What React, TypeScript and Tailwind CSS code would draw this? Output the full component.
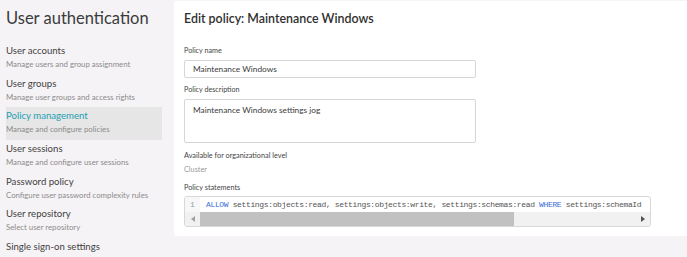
import React from "react";

const items = [
  { t: "User accounts", s: "Manage users and group assignment" },
  { t: "User groups", s: "Manage user groups and access rights" },
  { t: "Policy management", s: "Manage and configure policies", active: true },
  { t: "User sessions", s: "Manage and configure user sessions" },
  { t: "Password policy", s: "Configure user password complexity rules" },
  { t: "User repository", s: "Select user repository" },
  { t: "Single sign-on settings", s: "" },
];

export default function App() {
  return (
    <div
      className="w-[687px] h-[257px] overflow-hidden bg-[#f6f3f6] flex"
      style={{ fontFamily: "Lato, 'Open Sans', sans-serif" }}
    >
      <aside className="w-[174px] shrink-0 pl-[6px] pr-[12px]">
        <h1 className="mt-[6px] h-[24px] leading-[24px] whitespace-nowrap text-[16.5px] text-[#3b3b3b]">
          User authentication
        </h1>
        <div className="mt-[12px] flex flex-col">
          {items.map((it) => (
            <div
              key={it.t}
              className={`h-[32.67px] shrink-0 pt-[2px] ${it.active ? "bg-[#e6e6e6]" : ""}`}
            >
              <div
                className={`h-[14px] leading-[14px] whitespace-nowrap text-[9.6px] ${
                  it.active ? "text-[#1ea0b4]" : "text-[#3f3f3f]"
                }`}
              >
                {it.t}
              </div>
              <div className="h-[12px] leading-[12px] whitespace-nowrap text-[7.8px] text-[#8b8b8b]">{it.s}</div>
            </div>
          ))}
        </div>
      </aside>

      <main className="mt-[1px] h-[235px] flex-1 bg-white rounded-l-[2px] pl-[10px] pt-[8px]">
        <h2 className="h-[20px] leading-[20px] text-[12.4px] font-semibold text-[#2f2f2f]">
          Edit policy: Maintenance Windows
        </h2>
        <div className="mt-[17px] h-[10px] leading-[10px] text-[7.2px] text-[#454545]">Policy name</div>
        <div className="mt-[4px] w-[292px] h-[18px] border border-[#d6d6d6] rounded-[2px] pl-[8px] flex items-center text-[8.3px] text-[#3c3c3c]">
          Maintenance Windows
        </div>
        <div className="mt-[7px] h-[10px] leading-[10px] text-[7.2px] text-[#454545]">Policy description</div>
        <div className="mt-[4px] w-[292px] h-[44px] border border-[#d6d6d6] rounded-[2px] pl-[8px] pt-[3px] leading-[14px] text-[8.3px] text-[#3c3c3c]">
          Maintenance Windows settings jog
        </div>
        <div className="mt-[8px] h-[10px] leading-[10px] text-[7.3px] text-[#454545]">
          Available for organizational level
        </div>
        <div className="mt-[4px] h-[10px] leading-[10px] text-[7.3px] text-[#9a9a9a]">Cluster</div>
        <div className="mt-[8px] h-[10px] leading-[10px] text-[7.3px] text-[#454545]">Policy statements</div>
        <div className="mt-[3px] w-[467px] h-[31px] border border-[#d8d8d8] rounded-[3px] overflow-hidden flex flex-col">
          <div className="h-[16px] flex items-center">
            <div className="w-[15px] h-full bg-[#f7f7f7] flex items-center justify-center text-[8px] text-[#999]" style={{ fontFamily: "'Liberation Mono', monospace" }}>
              1
            </div>
            <div
              className="pl-[6px] whitespace-nowrap text-[8px] tracking-[-0.36px] text-[#555]"
              style={{ fontFamily: "'Liberation Mono', monospace" }}
            >
              <span className="text-[#3b6fd6]">ALLOW</span> settings:objects:read, settings:objects:write,
              settings:schemas:read <span className="text-[#3b6fd6]">WHERE</span> settings:schemaId
            </div>
          </div>
          <div className="h-[14px] flex items-center bg-[#f1f1f1]">
            <div className="w-[15px] h-full flex items-center justify-center">
              <svg width="4" height="6" viewBox="0 0 4 6">
                <path d="M4 0 L0 3 L4 6 Z" fill="#a3a3a3" />
              </svg>
            </div>
            <div className="w-[314px] h-full bg-[#c1c1c1]" />
            <div className="flex-1" />
            <div className="w-[15px] h-full flex items-center justify-center">
              <svg width="4" height="6" viewBox="0 0 4 6">
                <path d="M0 0 L4 3 L0 6 Z" fill="#505050" />
              </svg>
            </div>
          </div>
        </div>
      </main>
    </div>
  );
}
